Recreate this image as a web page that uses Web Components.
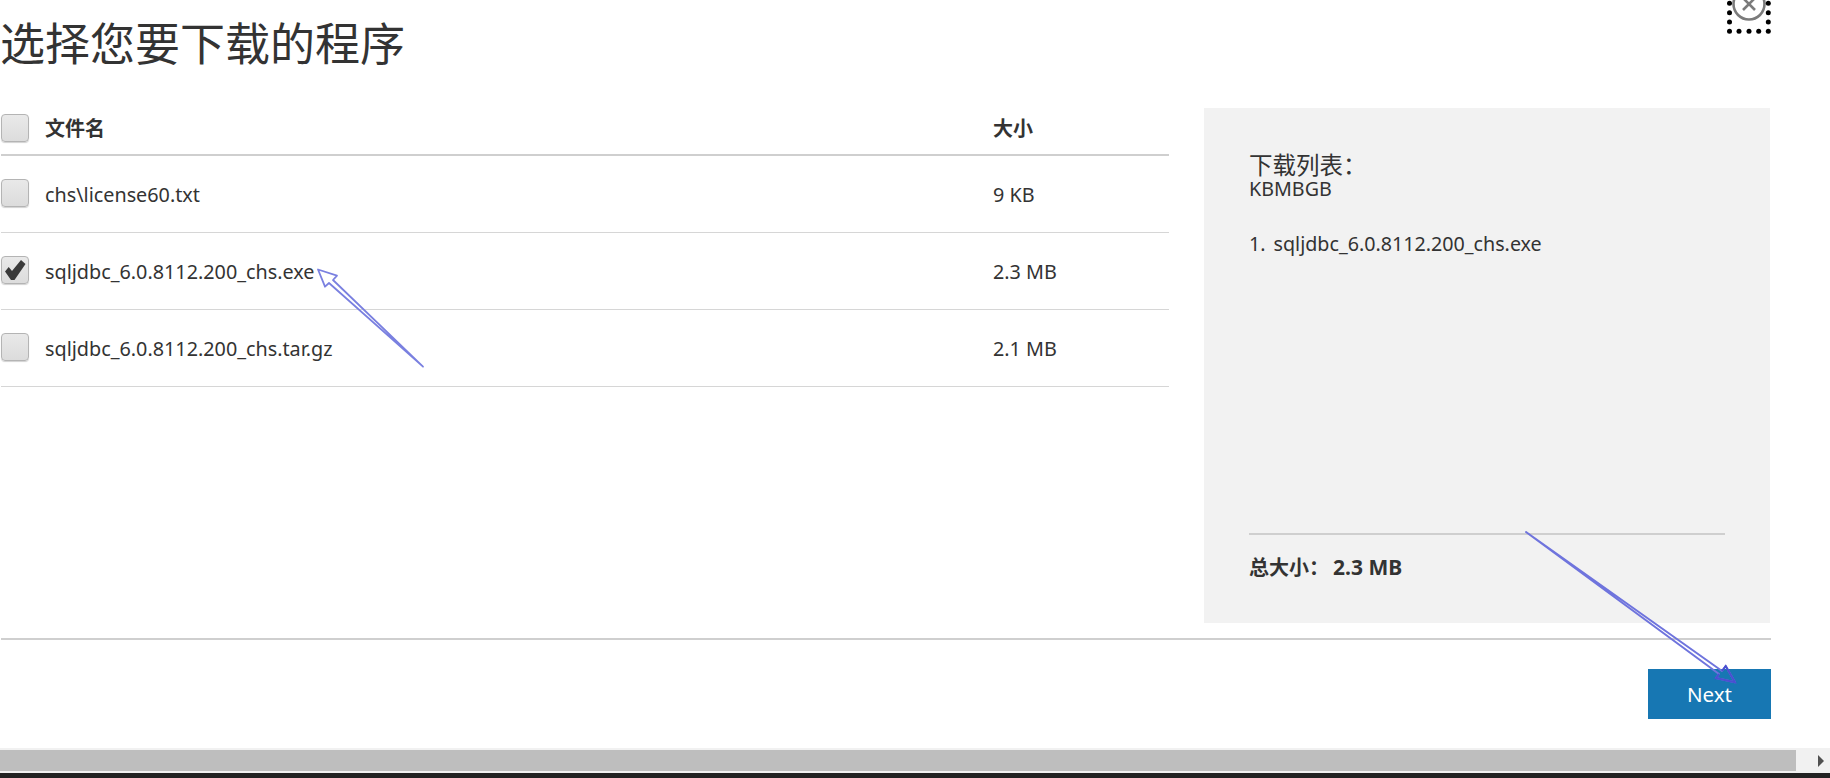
<!DOCTYPE html>
<html lang="zh">
<head>
<meta charset="utf-8">
<title>选择您要下载的程序</title>
<style>
  html, body { margin: 0; height: 100%; overflow: hidden; background: #fff; }
  body { font-family: "Noto Sans", "Noto Sans CJK SC", sans-serif; color: #333; }
</style>
</head>
<body>
<download-page></download-page>

<script>
// Casilla de verificacion
class DlCheckbox extends HTMLElement {
    constructor() {
        super();
        this.attachShadow({ mode: 'open' });
    }
    connectedCallback() {
        const tick = this.hasAttribute('checked')
            ? '<svg viewBox="0 0 28 28" width="28" height="28"><path d="M4 15.5 L7.7 11 L11 15 L20 4 L24.5 8 L13.5 24 L10 24 Z" fill="#3a3a3a"/></svg>'
            : '';
        this.shadowRoot.innerHTML = `
            <style>
                :host { display: block; width: 28px; height: 28px; flex: none; }
                div {
                    box-sizing: border-box; width: 28px; height: 28px;
                    border: 1px solid #b4b4b4; border-radius: 4px;
                    background: linear-gradient(#e9e9e9, #dcdcdc);
                    box-shadow: 0 1px 1px rgba(0,0,0,.18);
                }
                svg { display: block; margin: -1px; }
            </style>
            <div>${tick}</div>
        `;
    }
}
customElements.define('dl-checkbox', DlCheckbox);

// Fila de la tabla de archivos
class DlFileRow extends HTMLElement {
    constructor() {
        super();
        this.attachShadow({ mode: 'open' });
    }
    connectedCallback() {
        const head = this.hasAttribute('head');
        const checked = this.hasAttribute('checked') ? 'checked' : '';
        this.shadowRoot.innerHTML = `
            <style>
                :host {
                    display: grid; grid-template-columns: 44px 948px 1fr;
                    box-sizing: border-box;
                    height: ${head ? 48 : 77}px;
                    padding-top: ${head ? 6 : 23}px;
                    border-bottom: ${head ? 2 : 1}px solid ${head ? '#cfcfcf' : '#d6d6d6'};
                    font-size: ${head ? 20 : 19.8}px;
                    font-weight: ${head ? 700 : 400};
                }
                span { line-height: 28px; padding-top: ${head ? 1 : 2}px; white-space: nowrap; }
            </style>
            <dl-checkbox ${checked}></dl-checkbox>
            <span><slot name="name"></slot></span>
            <span><slot name="size"></slot></span>
        `;
    }
}
customElements.define('dl-file-row', DlFileRow);

// Panel lateral con el resumen de la descarga
class DlSummary extends HTMLElement {
    constructor() {
        super();
        this.attachShadow({ mode: 'open' });
    }
    connectedCallback() {
        this.shadowRoot.innerHTML = `
            <style>
                :host {
                    display: flex; flex-direction: column;
                    box-sizing: border-box; height: 515px;
                    padding: 45px 45px 0 45px;
                    background: #f2f2f2;
                    font-size: 19.7px;
                }
                h2 { margin: 0; font-size: 23.5px; font-weight: 400; line-height: 24px; }
                .units { line-height: 23px; }
                .list { margin-top: 32px; line-height: 24px; flex: 1; }
                .list b { font-weight: 400; margin-left: 8px; }
                .total {
                    border-top: 2px solid #cfcfcf;
                    height: 90px; box-sizing: border-box;
                    padding-top: 19px; line-height: 26px;
                    font-size: 20px;
                    font-weight: 700;
                }
                .total span { margin-left: 4px; font-size: 21px; }
            </style>
            <h2>下载列表：</h2>
            <div class="units">KBMBGB</div>
            <div class="list">1.<b>sqljdbc_6.0.8112.200_chs.exe</b></div>
            <div class="total">总大小：<span>2.3 MB</span></div>
        `;
    }
}
customElements.define('dl-summary', DlSummary);

// Barra de desplazamiento horizontal inferior
class DlScrollbar extends HTMLElement {
    constructor() {
        super();
        this.attachShadow({ mode: 'open' });
    }
    connectedCallback() {
        this.shadowRoot.innerHTML = `
            <style>
                :host { display: block; flex: none; }
                .track { display: flex; align-items: center; height: 25px; box-sizing: border-box; padding: 2px 0; background: #f1f1f1; }
                .thumb { width: 1796px; height: 21px; background: #bebebe; }
                .end { flex: 1; display: flex; justify-content: flex-end; padding-right: 6px; }
                .end i { border-left: 6px solid #505050; border-top: 6px solid transparent; border-bottom: 6px solid transparent; }
                .edge { height: 5px; background: #222; }
            </style>
            <div class="track"><div class="thumb"></div><div class="end"><i></i></div></div>
            <div class="edge"></div>
        `;
    }
}
customElements.define('dl-scrollbar', DlScrollbar);

// Pagina completa
class DownloadPage extends HTMLElement {
    constructor() {
        super();
        this.attachShadow({ mode: 'open' });
    }
    connectedCallback() {
        // Puntos del marco de foco que rodea el boton de cerrar
        const dots = [];
        const xs = [1729.5, 1739, 1749, 1758.7, 1768.3];
        xs.forEach((x) => dots.push(`<circle cx="${x}" cy="31.3" r="2.5"/>`));
        [3.3, 12.7, 22].forEach((y) => {
            dots.push(`<circle cx="${xs[0]}" cy="${y}" r="2.5"/>`);
            dots.push(`<circle cx="${xs[4]}" cy="${y}" r="2.5"/>`);
        });

        this.shadowRoot.innerHTML = `
            <style>
                :host {
                    display: flex; flex-direction: column;
                    position: relative; height: 778px; overflow: hidden;
                }
                .content { flex: 1; width: 1771px; box-sizing: border-box; padding-left: 1px; }
                h1 { margin: 0 0 0 -1px; height: 108px; font-size: 45px; font-weight: 400; line-height: 87px; color: #333; }
                .columns { display: grid; grid-template-columns: 1168px 566px; column-gap: 35px; }
                .foot {
                    margin-top: 15px; padding-top: 29px;
                    border-top: 2px solid #cfcfcf;
                    display: flex; justify-content: flex-end;
                }
                button {
                    width: 123px; height: 50px; border: 0; padding: 0;
                    background: #1777b3; color: #fff;
                    font: 20.5px "Noto Sans", sans-serif;
                }
                .marks { position: absolute; left: 0; top: 0; pointer-events: none; }
            </style>
            <div class="content">
                <h1>选择您要下载的程序</h1>
                <div class="columns">
                    <div>
                        <dl-file-row head><span slot="name">文件名</span><span slot="size">大小</span></dl-file-row>
                        <dl-file-row><span slot="name">chs\\license60.txt</span><span slot="size">9 KB</span></dl-file-row>
                        <dl-file-row checked><span slot="name">sqljdbc_6.0.8112.200_chs.exe</span><span slot="size">2.3 MB</span></dl-file-row>
                        <dl-file-row><span slot="name">sqljdbc_6.0.8112.200_chs.tar.gz</span><span slot="size">2.1 MB</span></dl-file-row>
                    </div>
                    <dl-summary></dl-summary>
                </div>
                <div class="foot"><button>Next</button></div>
            </div>
            <dl-scrollbar></dl-scrollbar>
            <svg class="marks" width="1830" height="778" fill="none">
                <g stroke="#7b7b7b" stroke-width="2.6">
                    <circle cx="1749" cy="4" r="15.5"/>
                    <path d="M1743 -2 L1755 10 M1755 -2 L1743 10"/>
                </g>
                <g fill="#000">${dots.join('')}</g>
                <path d="M423 366.7 L333 280 L337 275.7 L318 269.5 L325 286.7 L329 283 Z" stroke="#7a80e0" stroke-width="1.8" stroke-linejoin="round"/>
                <path d="M1526 532 L1722 671 L1725.7 666 L1735 682.3 L1716 678 L1719 674 Z" stroke="#6f74dd" stroke-width="2" stroke-linejoin="round"/>
                <path d="M1722 671 L1725.7 666 L1735 682.3 L1716 678 L1719 674" stroke="#4a50d0" stroke-width="2"/>
            </svg>
        `;
    }
}
customElements.define('download-page', DownloadPage);
</script>
</body>
</html>
